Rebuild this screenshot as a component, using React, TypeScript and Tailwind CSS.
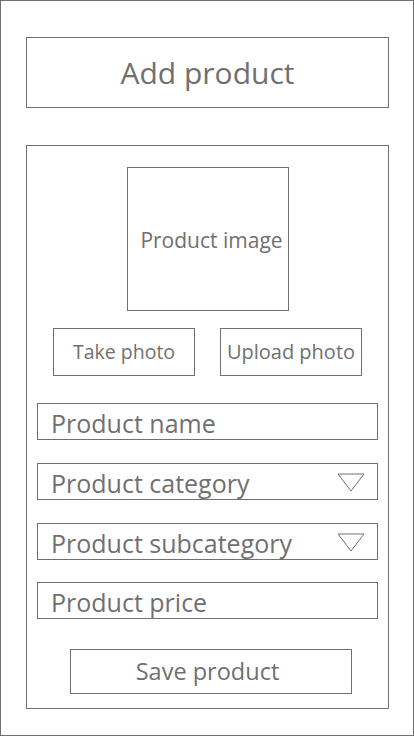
const line = 'border border-[#707070]'

function Field({ label, select, className = '' }: { label: string; select?: boolean; className?: string }) {
  return (
    <div className={`${line} mx-[10px] flex h-[37px] items-start justify-between ${className}`}>
      <span className="pl-[13px] pt-[7px] text-[25px] leading-none whitespace-nowrap">{label}</span>
      {select && (
        <svg className="mr-[12px] mt-[9px]" width="28" height="19" viewBox="0 0 28 19" aria-hidden="true">
          <polygon points="1,1 27,1 14,18" fill="none" stroke="#707070" strokeWidth="1" />
        </svg>
      )}
    </div>
  )
}

export default function App() {
  return (
    <div
      className={`${line} flex h-[736px] w-[414px] flex-col bg-white pl-[25px] pr-[24px] pt-[36px] text-[#707070]`}
      style={{ fontFamily: '"Open Sans", "Noto Sans", sans-serif' }}
    >
      <div className={`${line} flex h-[71px] items-center justify-center`}>
        <h1 className="text-[30px] leading-none">Add product</h1>
      </div>

      <div className={`${line} mt-[37px] flex h-[564px] flex-col pt-[21px]`}>
        <div className={`${line} ml-[100px] flex h-[144px] w-[162px] items-center justify-center`}>
          <span className="pl-[7px] pt-[2px] text-[21px] leading-none whitespace-nowrap">Product image</span>
        </div>

        <div className="mt-[17px] flex justify-between px-[26px]">
          <button className={`${line} h-[48px] w-[142px] text-[19.5px] leading-none`}>Take photo</button>
          <button className={`${line} h-[48px] w-[142px] text-[20px] leading-none whitespace-nowrap`}>
            Upload photo
          </button>
        </div>

        <div className="mt-[27px] flex flex-col">
          <Field label="Product name" />
          <Field label="Product category" select className="mt-[23px]" />
          <Field label="Product subcategory" select className="mt-[23px]" />
          <Field label="Product price" className="mt-[22px]" />
        </div>

        <button className={`${line} ml-[43px] mt-[30px] h-[45px] w-[282px] pr-[7px] text-[23.5px] leading-none`}>
          Save product
        </button>
      </div>
    </div>
  )
}
